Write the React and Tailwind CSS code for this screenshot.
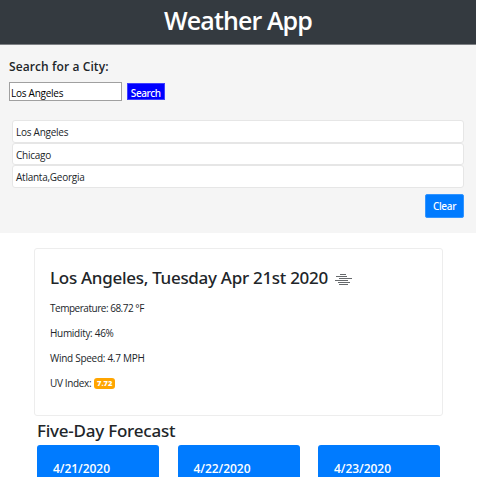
const cities = ["Los Angeles", "Chicago", "Atlanta,Georgia"];
const days = ["4/21/2020", "4/22/2020", "4/23/2020"];

function MistIcon() {
  return (
    <svg className="ml-[7px] mt-[8px] h-[12px] w-[18px] shrink-0" viewBox="0 0 18 12" stroke="#66696c" strokeWidth="1">
      <path d="M5 .5h6M1 2.5h11M4 4.5h13M0 6.5h13M3 8.5h12M4 10.5h9" />
    </svg>
  );
}

export default function App() {
  return (
    <div className="h-[477px] w-[477px] overflow-hidden whitespace-nowrap bg-white font-['Open_Sans','Noto_Sans',sans-serif] text-[10px] leading-[14px] text-[#212529]">
      <header className="flex h-[45px] w-[476px] justify-center border-b border-[#7d8084] bg-[#343a40] pt-[4px]">
        <h1 className="text-[25px] font-semibold leading-[32px] tracking-[-0.9px] text-white">Weather App</h1>
      </header>

      <section className="h-[188px] w-[476px] bg-[#f5f5f5] pl-[9px] pr-[12px] pt-[14px]">
        <h2 className="h-[23px] text-[12px] font-semibold leading-[16px] tracking-[0.1px]">Search for a City:</h2>
        <form className="flex h-[19px] items-center gap-[5px]" onSubmit={(e) => e.preventDefault()}>
          <input
            className="h-[19px] w-[113px] border border-[#a0a0a0] bg-white px-[1px] pt-[2px] text-[10px] tracking-[-0.25px] text-black outline-none"
            defaultValue="Los Angeles"
          />
          <button className="h-[17px] w-[37.5px] border border-[#4040ff] bg-[#0000ff] pt-[2px] font-['Noto_Sans',sans-serif] text-[10px] font-medium leading-[14px] tracking-[-0.4px] text-white">Search</button>
        </form>
        <ul className="ml-[3px] mt-[19px]">
          {cities.map((city) => (
            <li key={city} className="flex h-[22.5px] items-center rounded-[3px] border border-[#e6e6e6] bg-white pl-[3px] pt-[2px] tracking-[-0.25px]">
              {city}
            </li>
          ))}
        </ul>
        <div className="mt-[6px] flex justify-end">
          <button className="h-[24px] w-[39px] rounded-[2px] border border-[#3395ff] bg-[#007bff] pt-px font-['Noto_Sans',sans-serif] text-[10px] font-medium tracking-[-0.3px] text-white">Clear</button>
        </div>
      </section>

      <main className="px-[34px] pt-[15px]">
        <section className="h-[168px] rounded-[3px] border border-[#ededed] pl-[15px] pt-[17px]">
          <div className="flex h-[35px]">
            <h2 className="font-['Noto_Sans',sans-serif] text-[17px] font-medium leading-[24px] tracking-[-0.29px]">Los Angeles, Tuesday Apr 21st 2020</h2>
            <MistIcon />
          </div>
          <p className="h-[25px] tracking-[-0.48px]">Temperature: 68.72 °F</p>
          <p className="h-[25px] tracking-[-0.3px]">Humidity: 46%</p>
          <p className="h-[25px] tracking-[-0.28px]">Wind Speed: 4.7 MPH</p>
          <p className="flex tracking-[-0.35px]">
            UV Index:
            <span className="ml-[3px] mt-[2px] h-[11px] w-[21px] rounded-[3px] bg-[#ffa500] text-center text-[7.5px] font-extrabold leading-[11px] tracking-normal text-white">7.72</span>
          </p>
        </section>
        <h2 className="ml-[3px] mt-[3px] h-[26px] font-['Noto_Sans',sans-serif] text-[17px] font-medium leading-[24px] tracking-[-0.23px]">Five-Day Forecast</h2>
        <div className="ml-[3px] flex gap-[18.5px]">
          {days.map((day) => (
            <div key={day} className="h-[120px] w-[122px] shrink-0 rounded-[3px] bg-[#007bff] pl-[16px] pt-[16px] text-[12px] font-semibold leading-[16px] tracking-[-0.05px] text-white">
              {day}
            </div>
          ))}
        </div>
      </main>
    </div>
  );
}
